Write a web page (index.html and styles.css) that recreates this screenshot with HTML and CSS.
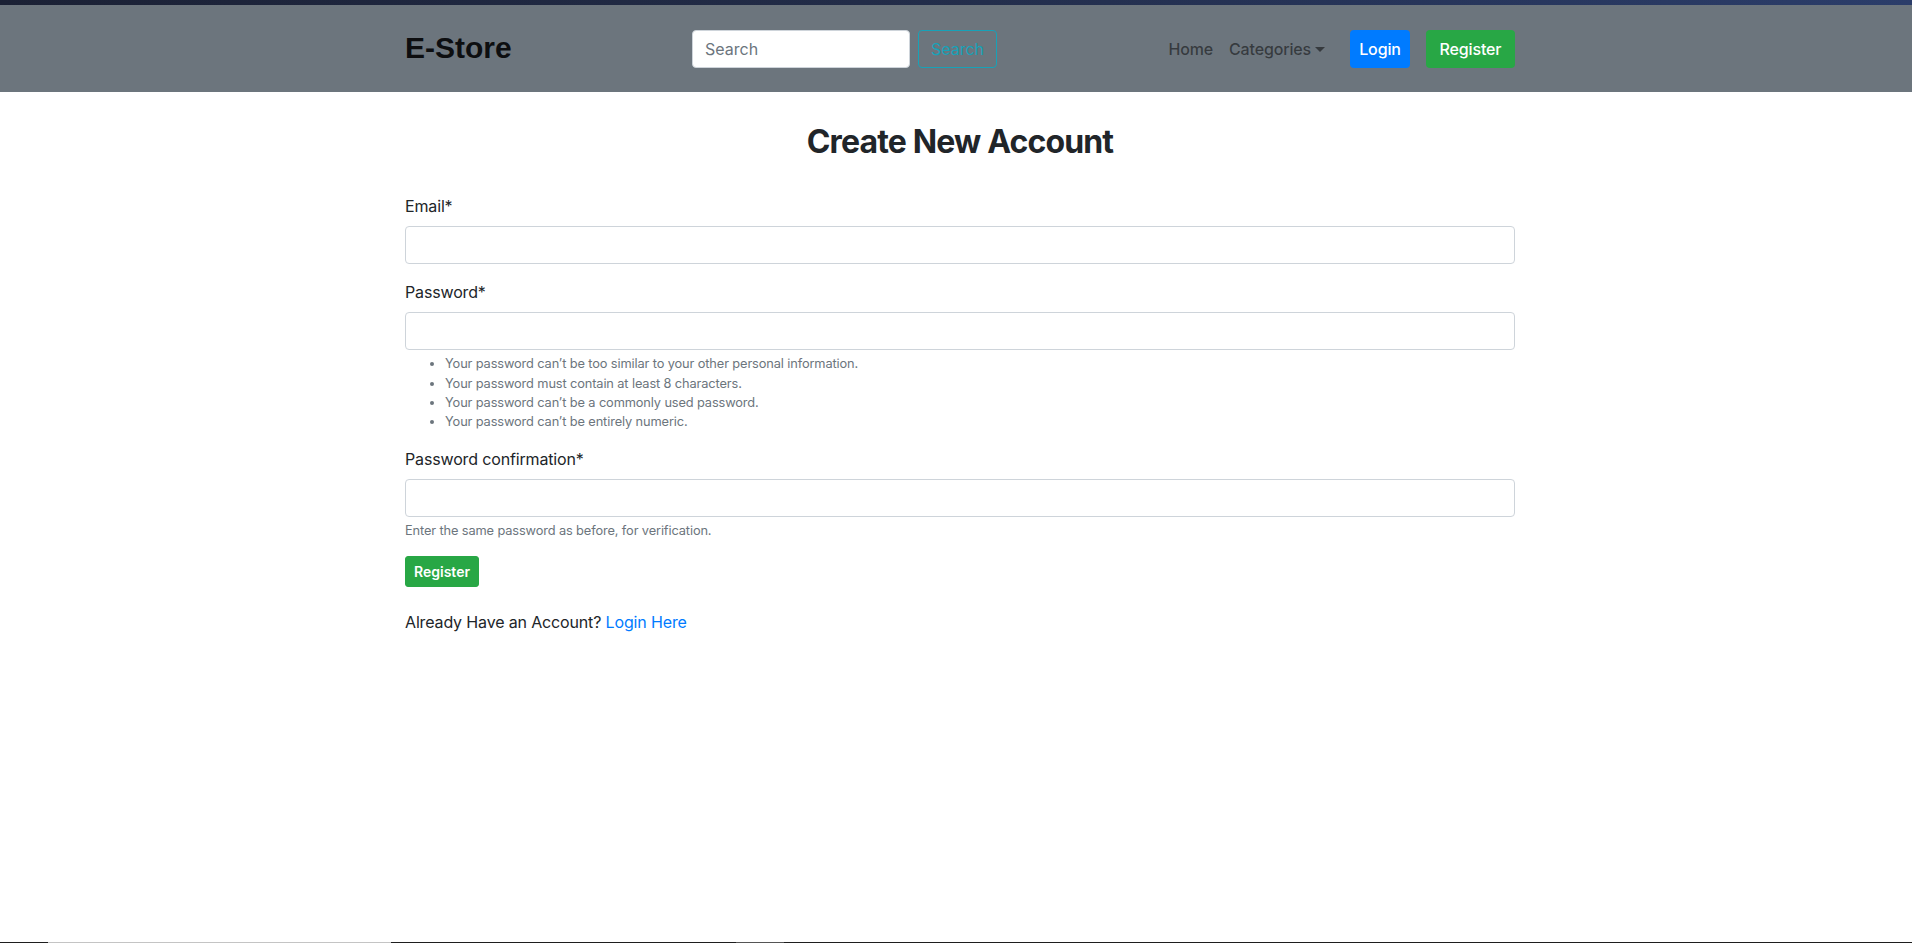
FILE: index.html
```html
<!DOCTYPE html>
<html lang="en">
<head>
<meta charset="utf-8">
<title>E-Store | Register</title>
<link rel="stylesheet" href="styles.css">
</head>
<body>
<div class="page">
  <div class="topstrip"></div>
  <header class="navbar">
    <div class="container nav-inner">
      <a class="brand" href="#">E-Store</a>
      <form class="search-form">
        <input class="search-input" type="search" placeholder="Search">
        <button class="btn-search" type="button">Search</button>
      </form>
      <nav class="nav-right">
        <ul class="nav-links">
          <li><a class="nav-link" href="#">Home</a></li>
          <li><a class="nav-link dropdown" href="#">Categories</a></li>
        </ul>
        <a class="btn btn-login" href="#">Login</a>
        <a class="btn btn-register" href="#">Register</a>
      </nav>
    </div>
  </header>
  <main class="container main">
    <h2 class="title">Create New Account</h2>
    <form class="reg-form">
      <div class="form-group">
        <label class="label">Email*</label>
        <input class="form-control" type="email">
      </div>
      <div class="form-group">
        <label class="label">Password*</label>
        <input class="form-control" type="password">
        <small class="form-text">
          <ul class="help-list">
            <li>Your password can’t be too similar to your other personal information.</li>
            <li>Your password must contain at least 8 characters.</li>
            <li>Your password can’t be a commonly used password.</li>
            <li>Your password can’t be entirely numeric.</li>
          </ul>
        </small>
      </div>
      <div class="form-group">
        <label class="label">Password confirmation*</label>
        <input class="form-control" type="password">
        <small class="form-text">Enter the same password as before, for verification.</small>
      </div>
      <button class="btn-submit" type="button">Register</button>
    </form>
    <p class="already">Already Have an Account? <a class="link" href="#">Login Here</a></p>
  </main>
  <div class="taskbar">
    <span class="tb-seg tb-dark1"></span>
    <span class="tb-seg tb-light"></span>
    <span class="tb-seg tb-dark2"></span>
    <span class="tb-seg tb-mid"></span>
    <span class="tb-seg tb-dark3"></span>
  </div>
</div>
</body>
</html>
```

FILE: styles.css
```css
* { box-sizing: border-box; }

html, body {
  margin: 0;
  padding: 0;
}

body {
  font-family: Inter, "Noto Sans", sans-serif;
  font-size: 16px;
  line-height: 1.5;
  letter-spacing: -0.15px;
  color: #212529;
  background: #fff;
}

.page {
  min-height: 100vh;
  display: flex;
  flex-direction: column;
}

.topstrip {
  height: 5px;
  background: linear-gradient(90deg, #1b2135 0%, #222c48 45%, #2b3d6a 100%);
}

.container {
  width: 1110px;
  margin-left: calc(50% - 551px);
}

.navbar {
  background: #6c757d;
  height: 87px;
}

.nav-inner {
  height: 100%;
  display: flex;
  align-items: center;
}

.brand {
  width: 287px;
  font-family: "Liberation Sans", Arial, sans-serif;
  font-weight: 700;
  font-size: 30px;
  line-height: 1;
  letter-spacing: 0;
  color: #0d0e10;
  text-decoration: none;
  padding-bottom: 2px;
}

.search-form {
  display: flex;
  align-items: center;
}

.search-input {
  width: 218px;
  height: 38px;
  padding: 6px 12px;
  border: 1px solid #ced4da;
  border-radius: 4px;
  font-family: inherit;
  font-size: 16px;
  color: #495057;
  background: #fff;
}

.search-input::placeholder {
  color: #6c757d;
}

.btn-search {
  margin-left: 8px;
  height: 38px;
  width: 79px;
  padding: 0;
  border: 1px solid #17a2b8;
  border-radius: 4px;
  background: transparent;
  color: #17a2b8;
  font-family: inherit;
  font-size: 16px;
}

.nav-right {
  margin-left: auto;
  display: flex;
  align-items: center;
}

.nav-links {
  display: flex;
  list-style: none;
  margin: 0;
  padding: 0;
}

.nav-link {
  display: block;
  padding: 8px;
  color: rgba(0, 0, 0, 0.5);
  text-decoration: none;
  font-weight: 500;
}

.dropdown::after {
  content: "";
  display: inline-block;
  margin-left: 4px;
  vertical-align: 3px;
  border-top: 5px solid;
  border-right: 5px solid transparent;
  border-left: 5px solid transparent;
}

.btn {
  display: inline-flex;
  align-items: center;
  justify-content: center;
  height: 38px;
  border-radius: 4px;
  color: #fff;
  text-decoration: none;
  font-weight: 500;
}

.btn-login {
  margin-left: 17px;
  width: 60px;
  background: #007bff;
}

.btn-register {
  margin-left: 16px;
  width: 89px;
  background: #28a745;
}

.main {
  flex: 1;
}

.title {
  margin: 31px 0 33px;
  text-align: center;
  font-size: 32px;
  line-height: 1.2;
  font-weight: 700;
  letter-spacing: -0.85px;
  color: #212529;
}

.form-group {
  margin-bottom: 16px;
}

.label {
  display: inline-block;
  margin-bottom: 8px;
}

.form-control {
  display: block;
  width: 100%;
  height: 38px;
  padding: 6px 12px;
  border: 1px solid #ced4da;
  border-radius: 4px;
  font-family: inherit;
  font-size: 16px;
  background: #fff;
}

.form-text {
  display: block;
  margin-top: 4px;
  font-size: 12.8px;
  line-height: 1.5;
  letter-spacing: -0.12px;
  color: #6c757d;
}

.help-list {
  margin: 0 0 15px;
  padding-left: 40px;
}

.btn-submit {
  height: 31px;
  width: 74px;
  padding: 0;
  border: 1px solid #28a745;
  border-radius: 3px;
  background: #28a745;
  color: #fff;
  font-family: inherit;
  font-size: 14px;
  font-weight: 600;
}

.already {
  margin: 23px 0 0;
}

.link {
  color: #007bff;
  text-decoration: none;
}

.taskbar {
  height: 1px;
  display: flex;
  background: #1e1e1e;
}

.tb-seg { display: block; height: 100%; }
.tb-dark1 { width: 48px; }
.tb-light { width: 343px; background: #c4c4c4; }
.tb-dark2 { width: 345px; }
.tb-mid { width: 48px; background: #555; }
.tb-dark3 { flex: 1; }
```
